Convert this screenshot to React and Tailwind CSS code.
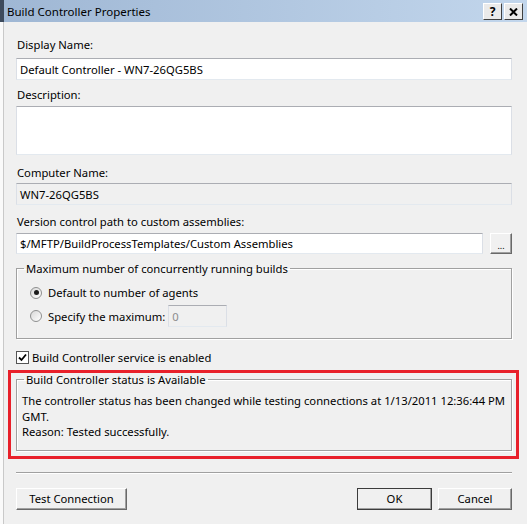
import React from 'react';

const field = 'border border-t-[#abadb3] border-l-[#dbdfe6] border-r-[#dbdfe6] border-b-[#e3e9ef]';
const btn =
  'flex items-center justify-center bg-[#f0f0f0] border border-t-white border-l-white border-r-[#696969] border-b-[#696969] shadow-[inset_-1px_-1px_0_#a0a0a0] text-black';
const group = 'border border-[#a0a0a0] shadow-[inset_1px_1px_0_white,1px_1px_0_white]';

const Radio = ({ checked }) => (
  <span className="w-[12px] h-[12px] rounded-full border border-[#8e8f8f] bg-gradient-to-br from-[#d8d8d8] to-white flex items-center justify-center shrink-0">
    {checked && <span className="w-[5px] h-[5px] rounded-full bg-[#1c1c1c]" />}
  </span>
);

const Check = () => (
  <span className="w-[13px] h-[13px] border border-[#555] bg-white flex items-center justify-center shrink-0">
    <svg width="9" height="9" viewBox="0 0 9 9">
      <path d="M1 4.5 L3.5 7 L8 1.5" stroke="#000" strokeWidth="1.8" fill="none" />
    </svg>
  </span>
);

const App = () => {
  return (
    <div className="w-[527px] h-[524px] flex overflow-hidden bg-[#f0f0f0] font-['Noto_Sans',sans-serif] text-[11.25px] leading-[15px] text-black">
      {/* strip of the window behind */}
      <div className="w-[4px] flex flex-col shrink-0">
        <div className="h-[22px] bg-[#3d4a5c]" />
        <div className="flex-1 bg-[#fafafa] border-r border-[#c9c9c9]" />
      </div>

      <div className="flex-1 flex flex-col">
        <div className="h-[22px] flex items-center justify-between bg-gradient-to-r from-[#9fb7d4] to-[#c2d6ec] pl-[3px] pr-[4px]">
          <span className="text-[11.5px] text-black">Build Controller Properties</span>
          <div className="flex gap-[2px] pt-[1px]">
            <span className="w-[19px] h-[17px] flex items-center justify-center bg-[#eaeaea] border border-t-white border-l-white border-r-[#404040] border-b-[#404040] font-bold text-[12px] leading-none">?</span>
            <span className="w-[19px] h-[17px] flex items-center justify-center bg-[#eaeaea] border border-t-white border-l-white border-r-[#404040] border-b-[#404040]">
              <svg width="9" height="8" viewBox="0 0 9 8">
                <path d="M1 0.5 L8 7.5 M8 0.5 L1 7.5" stroke="#000" strokeWidth="2" />
              </svg>
            </span>
          </div>
        </div>

        <div className="flex flex-col pl-[12px] pr-[15px]">
          <div className="mt-[15px] pl-[1px]">Display Name:</div>
          <div className={`${field} mt-[6px] h-[22px] bg-white px-[3px] flex items-center`}>
            Default Controller - WN7-26QG5BS
          </div>

          <div className="mt-[7px] pl-[1px]">Description:</div>
          <div className={`${field} mt-[4px] h-[49px] bg-white`} />

          <div className="mt-[10px] pl-[1px]">Computer Name:</div>
          <div className={`${field} mt-[3px] h-[22px] bg-[#f0f0f0] px-[3px] flex items-center`}>WN7-26QG5BS</div>

          <div className="mt-[9px] pl-[1px]">Version control path to custom assemblies:</div>
          <div className="mt-[4px] flex gap-[7px] h-[21px]">
            <div className={`${field} flex-1 bg-white px-[3px] flex items-center`}>
              $/MFTP/BuildProcessTemplates/Custom Assemblies
            </div>
            <div className={`${btn} w-[22px] items-end pb-[3px] text-[9px] leading-none`}>...</div>
          </div>

          <fieldset className={`${group} mt-[7px] px-[7px] pb-[11px]`}>
            <legend className="px-[2px]">Maximum number of concurrently running builds</legend>
            <div className="mt-[9px] ml-[6px] flex items-center gap-[6px] h-[15px]">
              <Radio checked />
              <span>Default to number of agents</span>
            </div>
            <div className="mt-[5px] ml-[6px] flex items-center gap-[6px] h-[22px]">
              <Radio />
              <span>Specify the maximum:</span>
              <span className={`${field} -ml-[3px] w-[59px] h-[22px] bg-[#f0f0f0] px-[3px] flex items-center text-[#8d8d8d]`}>0</span>
            </div>
          </fieldset>

          <div className="mt-[11px] flex items-center gap-[3px] h-[15px]">
            <Check />
            <span>Build Controller service is enabled</span>
          </div>

          <div className="mt-[5px] -ml-[8px] -mr-[7px] border-[3px] border-[#e8202a] pl-[5px] pr-[4px] pb-[5px]">
            <fieldset className={`${group} px-[5px] pb-[10px] -mt-[1px]`}>
              <legend className="ml-[2px] px-[2px]">Build Controller status is Available</legend>
              <p className="mt-[6px] leading-[15.5px]">
                The controller status has been changed while testing connections at 1/13/2011 12:36:44 PM GMT.
                <br />
                Reason: Tested successfully.
              </p>
            </fieldset>
          </div>

          <div className="mt-[13px] h-[2px] border-t border-[#a0a0a0] border-b border-b-white" />

          <div className="mt-[14px] flex items-center">
            <div className={`${btn} w-[111px] h-[22px]`}>Test Connection</div>
            <div className="flex-1" />
            <div className={`${btn} w-[75px] h-[22px] outline outline-1 outline-[#3c3c3c] -outline-offset-1`}>OK</div>
            <div className={`${btn} ml-[6px] w-[74px] h-[22px]`}>Cancel</div>
          </div>
        </div>
      </div>
    </div>
  );
};

export default App;
